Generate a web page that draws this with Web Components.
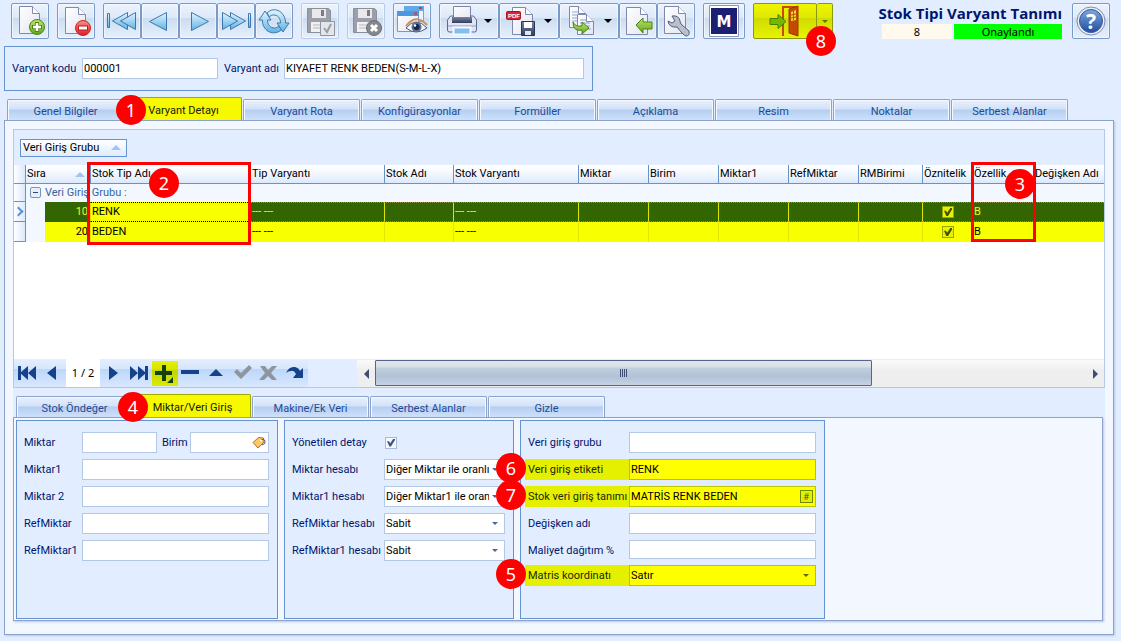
<!DOCTYPE html>
<html lang="tr">
<head>
<meta charset="utf-8">
<title>Stok Tipi Varyant Tanımı</title>
<style>
html, body { height: 100%; }
body {
  margin: 0;
  background: #e2eeff;
  color: #00156e;
  font: 11px/16px Roboto, "Noto Sans", sans-serif;
  --line: #8ca2cc;
  --frame: #6593cf;
  --input-line: #b3c8e6;
  --panel: #f3f7ff;
  --base: #e2eeff;
  --mark: #ffff00;
  --mark-dim: #e4f000;
}
</style>
</head>
<body>
<app-page>
  <tool-bar slot="toolbar"></tool-bar>
  <group-box slot="header" class="head">
    <form-field label="Varyant kodu" value="000001" style="--label:70px;width:206px"></form-field>
    <form-field label="Varyant adı" value="KIYAFET RENK BEDEN(S-M-L-X)" style="--label:60px;flex:1"></form-field>
  </group-box>
  <tab-strip slot="tabs" active="1" badge="1" items="Genel Bilgiler|Varyant Detayı|Varyant Rota|Konfigürasyonlar|Formüller|Açıklama|Resim|Noktalar|Serbest Alanlar"></tab-strip>
  <data-grid slot="grid"></data-grid>
  <record-nav slot="nav"></record-nav>
  <tab-strip slot="subtabs" style="--badge:102px" active="1" badge="4" items="Stok Öndeğer|Miktar/Veri Giriş|Makine/Ek Veri|Serbest Alanlar|Gizle"></tab-strip>
  <group-box slot="detail" style="width:262px;--label:58px">
    <field-pair>
      <form-field label="Miktar" style="flex:1"></form-field>
      <form-field label="Birim" icon="tag" style="--label:28px;width:107px"></form-field>
    </field-pair>
    <form-field label="Miktar1"></form-field>
    <form-field label="Miktar 2"></form-field>
    <form-field label="RefMiktar"></form-field>
    <form-field label="RefMiktar1"></form-field>
  </group-box>
  <group-box slot="detail" style="width:230px;--label:92px">
    <form-field label="Yönetilen detay" kind="check"></form-field>
    <form-field label="Miktar hesabı" kind="select" value="Diğer Miktar ile oranlı"></form-field>
    <form-field label="Miktar1 hesabı" kind="select" value="Diğer Miktar1 ile oranlı"></form-field>
    <form-field label="RefMiktar hesabı" kind="select" value="Sabit"></form-field>
    <form-field label="RefMiktar1 hesabı" kind="select" value="Sabit"></form-field>
  </group-box>
  <group-box slot="detail" style="width:305px;--label:101px">
    <form-field label="Veri giriş grubu"></form-field>
    <form-field label="Veri giriş etiketi" value="RENK" marked badge="6"></form-field>
    <form-field label="Stok veri giriş tanımı" value="MATRİS RENK BEDEN" icon="hash" marked badge="7"></form-field>
    <form-field label="Değişken adı"></form-field>
    <form-field label="Maliyet dağıtım %" compact></form-field>
    <form-field label="Matris koordinatı" kind="select" value="Satır" marked badge="5"></form-field>
  </group-box>
</app-page>

<script>
const define = (name, render) => customElements.define(name, class extends HTMLElement {
  connectedCallback() {
    if (this.shadowRoot) return;
    this.attachShadow({ mode: 'open' }).innerHTML = '<style>*{box-sizing:border-box}</style>' + render(this);
  }
});

/* ---------- icons ---------- */
const svg = (w, h, body) => `<svg width="${w}" height="${h}" viewBox="0 0 ${w} ${h}" aria-hidden="true">${body}</svg>`;
const GRAD = `<defs>
  <linearGradient id="b" x1="0" y1="0" x2="0" y2="1"><stop offset="0" stop-color="#e4f5fd"/><stop offset="1" stop-color="#5db2e4"/></linearGradient>
  <linearGradient id="g" x1="0" y1="0" x2="0" y2="1"><stop offset="0" stop-color="#c2e66b"/><stop offset="1" stop-color="#5fa51c"/></linearGradient>
  <linearGradient id="r" x1="0" y1="0" x2="0" y2="1"><stop offset="0" stop-color="#ff8d83"/><stop offset="1" stop-color="#d81f26"/></linearGradient>
  <linearGradient id="p" x1="0" y1="0" x2="1" y2="1"><stop offset="0" stop-color="#ffffff"/><stop offset="1" stop-color="#e3e6f2"/></linearGradient>
  <linearGradient id="k" x1="0" y1="0" x2="0" y2="1"><stop offset="0" stop-color="#7a86a5"/><stop offset="1" stop-color="#323c5c"/></linearGradient>
  <linearGradient id="q" x1="0" y1="0" x2="0" y2="1"><stop offset="0" stop-color="#7fa6dc"/><stop offset="1" stop-color="#1f4e9f"/></linearGradient>
</defs>`;
const page = (x, y, w, h) => `<path d="M${x} ${y}h${w - 7}l7 7v${h - 7}h${-w}z" fill="url(#p)" stroke="#8088b0"/><path d="M${x + w - 7} ${y}v7h7" fill="#fff" stroke="#8088b0"/>`;
const floppy = c => `<path d="M3.5 3.5h21l2 2v22h-23z" fill="${c}" stroke="#8b8f99"/><path d="M8 4h14v9H8z" fill="#e9e9ec"/><path d="M17 5h3v6h-3z" fill="#777c86"/><path d="M7 17h16v10H7z" fill="#f1f1f3"/><path d="M9 20h12M9 23h12" stroke="#b5b7bd"/>`;
const ICON = {
  add: svg(32, 32, GRAD + page(5.5, 1.5, 20, 27) + `<circle cx="23" cy="22" r="7.5" fill="url(#g)" stroke="#4a8317"/><path d="M23 17v10M18 22h10" stroke="#4a8317" stroke-width="4"/><path d="M23 18v8M19 22h8" stroke="#fff" stroke-width="2.5"/>`),
  del: svg(32, 32, GRAD + page(5.5, 2.5, 20, 26) + `<circle cx="23" cy="23" r="7.5" fill="url(#r)" stroke="#c22"/><path d="M18 23h10" stroke="#b51a20" stroke-width="5"/><path d="M19 23h8" stroke="#fff" stroke-width="3"/>`),
  first: svg(32, 32, GRAD + `<g fill="url(#b)" stroke="#3d78ac" stroke-linejoin="round"><path d="M1.5 8.5h2v14h-2z"/><path d="M21.5 7.5v17l-15-8.5z"/><path d="M29.5 7.5v17l-15-8.5z"/></g>`),
  prev: svg(32, 32, GRAD + `<path d="M22.5 7.5v18l-17-9z" fill="url(#b)" stroke="#3d78ac" stroke-linejoin="round"/>`),
  next: svg(32, 32, GRAD + `<path d="M9.5 7.5v18l17-9z" fill="url(#b)" stroke="#3d78ac" stroke-linejoin="round"/>`),
  last: svg(32, 32, GRAD + `<g fill="url(#b)" stroke="#3d78ac" stroke-linejoin="round"><path d="M28.5 8.5h2v14h-2z"/><path d="M10.5 7.5v17l15-8.5z"/><path d="M2.5 7.5v17l15-8.5z"/></g>`),
  sync: svg(32, 32, GRAD + `<g fill="url(#b)" stroke="#3d78ac" stroke-linejoin="round"><path d="M1 15L7 6l6 9H9.500c0 5 3 8 7 8 2 0 3-1 4-2l3 4C14 32 4 25 4.500 15z"/><path d="M31 18l-6 9-6-9h3.500c0-5-3-8-7-8-2 0-3 1-4 2L9 8C17 0 28 8 27.500 18z"/></g>`),
  save: svg(32, 32, floppy('#9b9fa9') + `<path d="M16.5 16.5h14v14h-14z" fill="#e4e6ea" stroke="#8f949e"/><path d="M20 23l3 4 4-8" fill="none" stroke="#9a9ea8" stroke-width="2"/>`),
  cancel: svg(32, 32, floppy('#9b9fa9') + `<circle cx="24" cy="23" r="7.5" fill="#85888f" stroke="#6c7078"/><path d="M21 20l6 6M27 20l-6 6" stroke="#fff" stroke-width="3"/>`),
  view: svg(32, 32, GRAD + `<path d="M8.5 1.5h19v15h-19z" fill="#eef5ff" stroke="#7ba3d5"/><path d="M8 1h20v5H8z" fill="#62a9e8"/><path d="M23 3h3" stroke="#d33" stroke-width="2"/><path d="M1.5 6.5h21v20h-21z" fill="url(#p)" stroke="#6f9bd0"/><path d="M1 6h22v5H1z" fill="#4a99e0"/><path d="M18 8.5h3" stroke="#e33" stroke-width="2"/><path d="M10 23q10-12 21 0-11 8-21 0z" fill="#f4f7fc" stroke="#4d5a78"/><path d="M10 21q10-13 21-1" fill="none" stroke="#c9935c" stroke-width="2"/><circle cx="20.5" cy="22" r="5" fill="#5b6c92"/><circle cx="20.5" cy="22" r="3" fill="#1b243e"/><circle cx="19" cy="20.5" r="1.2" fill="#fff"/>`),
  print: svg(32, 32, GRAD + `<path d="M7.5 1.5h17v14h-17z" fill="url(#p)" stroke="#7b86ad"/><path d="M1.5 15l3-4h3v5h17v-5h3l3 4v10q0 2-2 2h-25q-2 0-2-2z" fill="#dfe5f2" stroke="#5d6890"/><path d="M6 12h20v6H6z" fill="url(#k)"/><path d="M2 21h28" stroke="#8f9bbd"/><path d="M7.5 22.5h17v7h-17z" fill="#7fc0f0" stroke="#f5f8ff" stroke-width="2"/>`),
  pdf: svg(32, 32, GRAD + page(6.5, 2.5, 20, 27) + `<rect x=".5" y="6.5" width="14" height="8" rx="1" fill="#d8262c" stroke="#a8161c"/><text x="8" y="13" text-anchor="middle" font-family="Liberation Sans" font-weight="bold" font-size="6" fill="#fff">PDF</text><path d="M15.5 16.5h13v14h-13z" fill="url(#k)" stroke="#2b3554"/><path d="M18 17h8v6h-8z" fill="#fff"/><path d="M19 26h6v4h-6z" fill="#dfe6f5"/>`),
  copy: svg(32, 32, GRAD + page(3.5, 1.5, 16, 21) + `<path d="M6 7h6M6 10h6M6 13h9M6 16h9" stroke="#98a8cf"/>` + page(11.5, 9.5, 16, 20) + `<path d="M14 15h6M14 18h10M14 21h10M18 24h7" stroke="#7fa0dc"/><path d="M7 17q2 5 9 4v-4l7 6-7 6v-4Q7 27 7 17z" fill="url(#g)" stroke="#4a8317"/>`),
  imp: svg(32, 32, GRAD + page(4.5, 2.5, 21, 27) + `<path d="M14 20l7-7v4h9v7h-9v4z" fill="url(#g)" stroke="#4a8317"/>`),
  wrench: svg(32, 32, GRAD + page(4.5, 1.5, 21, 27) + `<path d="M12 11q7-1 8 5 0 2 2 4l7 6q1 5-3 5-3-1-9-9-8 1-9-6l4 2 3-2z" fill="#b9bfcd" stroke="#555f7e"/>`),
  m: svg(34, 32, `<path d="M2.5 .5h29v31h-29z" fill="#fff" stroke="#8c93b8"/><path d="M4 3h26v26H4z" fill="#1b2072"/><text x="17" y="22" text-anchor="middle" font-family="DejaVu Sans" font-weight="bold" font-size="15" fill="#fff">M</text>`),
  exit: svg(32, 32, `<path d="M14 31V2h14v29" fill="none" stroke="#cc4a00" stroke-width="2"/><path d="M20 4l9-3v30l-9-3z" fill="#c54a00" stroke="#9a3600"/><path d="M22 7l5-2v10l-5 1z" fill="#eadf2a"/><path d="M24.5 6v9M22 10l5-1M22 13l5-1" stroke="#c54a00"/><path d="M1 13.5h8v-4l8 7-8 7v-4H1z" fill="#76b800" stroke="#4b7f00"/>`),
  help: svg(32, 32, GRAD + `<circle cx="16" cy="16" r="14" fill="#e9eef8" stroke="#7c8fb8"/><circle cx="16" cy="16" r="11.5" fill="url(#q)" stroke="#3c5b98"/><text x="16" y="24" text-anchor="middle" font-family="Noto Sans" font-weight="bold" font-size="21" fill="#fff">?</text>`),
  tag: svg(14, 13, `<path d="M1 6.5L6.5 1.500l5 .5.5 4-6 6z" fill="#ffc864" stroke="#a9742c"/><path d="M9 4q3-2 4 1t-3 4" fill="none" stroke="#556" /><circle cx="9" cy="4.5" r="1" fill="#fff"/>`)
};
const NAV = {
  'İlk kayıt': ['#15428b', 'M-9-7h3v14h-3zM1-7v14l-8-7zM9-7v14l-8-7z'],
  'Önceki kayıt': ['#15428b', 'M3-7v14l-9-7z'],
  'Sonraki kayıt': ['#15428b', 'M-4-7v14l9-7z'],
  'Son kayıt': ['#15428b', 'M9-7h-3v14h3zM-1-7v14l8-7zM-9-7v14l8-7z'],
  'Ekle': ['#15400b', 'M-3-9h4v6h6v4h-6v6h-4v-6h-7v-4h7zM8 3v6h-6z'],
  'Sil': ['#15428b', 'M-10-3h18v4h-18z'],
  'Düzenle': ['#15428b', 'M-8 3l7-7 7 7z'],
  'Onayla': ['#8f959e', 'M-9-1l3-3 4 4 8-8 3 3-11 11z'],
  'Vazgeç': ['#8f959e', 'M-9-7h5l3 4 4-4h5l-6 7 6 7h-5l-4-4-4 4h-5l6-7z'],
  'Yenile': ['#15428b', 'M-9 0q3-7 9-6 4 1 5 4l3-3v10h-10l3-4q-2-4-5-3-3 0-5 2z']
};

/* ---------- numbered badge ---------- */
define('num-badge', () => `<style>
  :host { position: absolute; z-index: 3; width: 30px; height: 30px; border-radius: 50%; background: #fe0000;
    color: #fff; font: 18px/30px "Noto Sans", sans-serif; text-align: center; }
</style><slot></slot>`);

/* ---------- toolbar ---------- */
define('tool-button', el => `<style>
  :host { display: flex; position: relative; }
  button { display: flex; align-items: center; justify-content: center; height: 36px; width: 38px; padding: 0;
    border: 1px solid #7c9ac9; border-radius: 2px; font: inherit;
    background: linear-gradient(#ebf3fe, #dde9f8 40%, #ccdcf0 42%, #e6f0fc); box-shadow: inset 0 0 0 1px #ffffff80; }
  .split { width: 60px; justify-content: flex-start; padding-left: 6px; gap: 6px; }
  .split i { border: 4px solid transparent; border-top-color: #000; border-bottom: 0; }
  .wide { width: 42px; }
  .exit { width: 64px; border-color: #8a9a10; box-shadow: none; background: linear-gradient(#eef600, #dfe800 40%, #cfdb00 42%, #e8f200); }
  .more { width: 16px; border-color: #8a9a10; border-left: 0; box-shadow: none; background: linear-gradient(#eef600, #dfe800 40%, #cfdb00 42%, #e8f200); }
  .more i { border: 3px solid transparent; border-top-color: #5d7a00; border-bottom: 0; }
  .off { border-color: #b9cae4; }
</style>
<button type="button" aria-label="${el.title}" class="${el.getAttribute('look') || ''}">${ICON[el.getAttribute('icon')]}${el.getAttribute('look') === 'split' ? '<i></i>' : ''}</button>
${el.getAttribute('look') === 'exit' ? '<button type="button" class="more" aria-label="Diğer"><i></i></button>' : ''}<slot></slot>`);

const tb = (icon, title, look = '') => `<tool-button icon="${icon}" title="${title}" look="${look}"></tool-button>`;
define('tool-bar', () => `<style>
  :host { display: flex; align-items: flex-start; gap: 8px; padding: 3px 11px 0; }
  .set { display: flex; position: relative; }
  .status { margin: 0 2px 0 auto; color: #00156e; }
  h1 { margin: 0; font: bold 15px/21px "Open Sans", "Noto Sans", sans-serif; text-align: right; white-space: nowrap; }
  .row { display: flex; gap: 2px; justify-content: flex-end; color: #000; text-align: center; line-height: 15px; }
  .no { width: 70px; background: #fff9ee; }
  .ok { width: 108px; background: #0f0; }
  .row, num-badge { font-family: "Noto Sans", sans-serif; }
  num-badge { left: 53px; top: 23px; }
</style>
${tb('add', 'Yeni')}${tb('del', 'Sil')}
<div class="set">${tb('first', 'İlk')}${tb('prev', 'Önceki')}${tb('next', 'Sonraki')}${tb('last', 'Son')}${tb('sync', 'Yenile')}</div>
${tb('save', 'Kaydet', 'off')}${tb('cancel', 'Vazgeç', 'off')}${tb('view', 'İncele')}
<div class="set">${tb('print', 'Yazdır', 'split')}${tb('pdf', 'PDF kaydet', 'split')}${tb('copy', 'Kopyala', 'split')}${tb('imp', 'İçeri al')}${tb('wrench', 'Ayarlar')}</div>
${tb('m', 'M', 'wide')}
<div class="set">${tb('exit', 'Çıkış', 'exit')}<num-badge>8</num-badge></div>
<div class="status"><h1>Stok Tipi Varyant Tanımı</h1><div class="row"><span class="no">8</span><span class="ok">Onaylandı</span></div></div>
${tb('help', 'Yardım')}`);

/* ---------- framed group ---------- */
define('group-box', () => `<style>
  :host { display: flex; flex-direction: column; gap: 6px; box-sizing: border-box; min-height: 199px;
    padding: 11px 8px 11px 7px; border: 1px solid var(--frame); background: var(--base); }
  :host(.head) { flex-direction: row; min-height: 0; width: 589px; margin: 7px 4px 6px; }
</style><slot></slot>`);
define('field-pair', () => `<style>:host { display: flex; gap: 5px; }</style><slot></slot>`);

/* ---------- labelled field ---------- */
define('form-field', el => {
  const kind = el.getAttribute('kind'), value = el.getAttribute('value') || '', icon = el.getAttribute('icon');
  const control = kind === 'check' ? '<input id="c" type="checkbox" checked>'
    : kind === 'select' ? `<span class="box"><select id="c"><option>${value}</option></select><i></i></span>`
    : `<span class="box"><input id="c" type="text" value="${value}">${icon === 'tag' ? ICON.tag : icon === 'hash' ? '<button type="button">#</button>' : ''}</span>`;
  return `<style>
  :host { display: flex; position: relative; min-width: 0; height: 21px; }
  :host([compact]) { height: 19px; }
  label { width: calc(var(--label) + 3px); flex: none; margin-left: -3px; padding-left: 3px; line-height: 21px; white-space: nowrap; }
  .box { display: flex; align-items: center; flex: 1; min-width: 0; position: relative; border: 1px solid var(--input-line); background: #fff; }
  input[type=text], select { appearance: none; border: 0; background: none; padding: 0 1px; margin: 0; width: 100%; min-width: 0;
    height: 100%; font: inherit; color: #000; outline: 0; border-radius: 0; }
  select { padding-right: 15px; text-overflow: clip; }
  i { position: absolute; right: 6px; border: 3px solid transparent; border-top-color: #4a6a94; border-bottom: 0; }
  svg { flex: none; margin-right: 2px; }
  input[type=checkbox] { appearance: none; align-self: center; width: 12px; height: 12px; margin: 0 0 0 1px; border: 1px solid #a9bbd8; background: #f4f8ff; }
  input[type=checkbox]::before { content: ""; display: block; width: 8px; height: 8px; margin: 1px; background: #3f5687;
    clip-path: polygon(0 35%, 25% 35%, 40% 60%, 80% 0, 100% 0, 100% 20%, 50% 100%, 30% 100%); }
  button { flex: none; width: 13px; height: 13px; margin-right: 2px; padding: 0; border: 1px solid #6f8a00; background: #e4f000; color: #3f5a00; font: 9px/10px "Noto Sans", sans-serif; }
  :host([marked]) label { background: var(--mark-dim); color: #1a2a00; }
  :host([marked]) .box { background: var(--mark); border-color: #b9c400; }
  :host([marked]) i { border-top-color: #5d6a00; }
  num-badge { left: -32px; top: -6px; }
</style><label for="c">${el.getAttribute('label')}</label>${control}${el.hasAttribute('badge') ? `<num-badge>${el.getAttribute('badge')}</num-badge>` : ''}`;
});

/* ---------- tabs ---------- */
define('tab-strip', el => {
  const active = +el.getAttribute('active');
  return `<style>
  :host { display: flex; position: relative; align-items: flex-end; gap: 1px; }
  button { width: 117px; height: 21px; padding: 3px 0 0; border: 1px solid var(--line); border-bottom: 0; border-radius: 2px 2px 0 0;
    background: linear-gradient(#e8f1fe, #d3e2f7 45%, #b4cef2 50%, #cfe1fa); box-shadow: inset 1px 1px #f5f9ff, inset -1px 0 #f5f9ff;
    color: #1e4b96; font: inherit; line-height: 16px; white-space: nowrap; }
  button[aria-selected=true] { height: 23px; background: #f6f900; border-color: #a3a800; box-shadow: none; color: #15200a; }
  num-badge { left: var(--badge, 109px); top: -2px; }
</style>${el.getAttribute('items').split('|').map((t, i) => `<button type="button" role="tab" aria-selected="${i === active}">${t}</button>`).join('')}<num-badge>${el.getAttribute('badge')}</num-badge>`;
});

/* ---------- data grid ---------- */
const COLS = [['', 11], ['Sıra', 65], ['Stok Tip Adı', 160], ['Tip Varyantı', 134], ['Stok Adı', 69], ['Stok Varyantı', 125], ['Miktar', 70], ['Birim', 70], ['Miktar1', 70], ['RefMiktar', 70], ['RMBirimi', 64], ['Öznitelik', 50], ['Özellik', 61], ['Değişken Adı', 0]];
const ROWS = [['', '10', 'RENK', '--- ---', '', '--- ---', '', '', '', '', '', '*', 'B', ''], ['', '20', 'BEDEN', '--- ---', '', '--- ---', '', '', '', '', '', '*', 'B', '']];
define('data-grid', () => `<style>
  :host { display: block; position: relative; flex: 1; background: #fff; color: #000; }
  .group { display: flex; align-items: center; height: 35px; padding: 0 6px; background: var(--base); }
  .chip { display: flex; align-items: center; width: 107px; height: 18px; padding: 0 5px 0 2px; border: 1px solid var(--frame);
    background: linear-gradient(#fff, #e0ebfb); font: inherit; color: #000; white-space: nowrap; }
  .sort { margin-left: auto; border: 5px solid transparent; border-bottom-color: #9cc5f3; border-top: 0; }
  table { width: 100%; table-layout: fixed; border-collapse: separate; border-spacing: 0; }
  th, td { padding: 0 0 0 1px; text-align: left; font-weight: normal; overflow: hidden; white-space: nowrap; border-left: 1px solid var(--frame); }
  th { height: 19px; border-bottom: 1px solid var(--frame); background: linear-gradient(#fff, #f4f8ff 45%, #dbe8fb); line-height: 16px; }
  th div { display: flex; align-items: center; padding-right: 5px; }
  tr.sub td { height: 18px; line-height: 16px; background: var(--panel); color: #3764a0; }
  .rows td { height: 20px; line-height: 16px; background: #f7ff00; border-left-color: #e0e800; }
  .rows td:nth-child(2) { text-align: right; padding-right: 2px; border-left-color: var(--frame); background: linear-gradient(90deg, var(--panel) 19px, #f7ff00 19px); }
  .rows tr.on td { background: #336600; color: #f2f62a; border-left-color: #dbe600; border-top: 1px dotted #8f8f4a; border-bottom: 1px dotted #8f8f4a; }
  .rows tr.on td:nth-child(2) { background: linear-gradient(90deg, var(--panel) 19px, #336600 19px); border-left-color: var(--frame); border-top: 0; border-bottom: 0; }
  .rows tr.on td:nth-child(3) { background: #f7ff00; color: #000; border-top: 1px dotted #000; border-bottom: 1px dotted #000; }
  th:first-child, tr.sub td:first-child, .rows tr td:first-child, .rows tr.on td:first-child { background: linear-gradient(90deg, #fff, #dbe8fb);
    border: 0; border-bottom: 1px solid var(--frame); padding: 0; }
  .on td:first-child::before { content: ""; display: block; width: 5px; height: 5px; margin-left: 1px; border: solid #5a92d8; border-width: 2px 2px 0 0; transform: rotate(45deg); }
  .fold { width: 11px; height: 11px; margin: 0 4px 0 3px; padding: 0; border: 1px solid #7c95bd; border-radius: 2px; vertical-align: -1px;
    background: linear-gradient(#2b4a7c, #2b4a7c) center / 5px 1px no-repeat, #e8effa; }
  input { display: block; appearance: none; width: 12px; height: 12px; margin: 0 auto; border: 1px solid #9ba800; background: #eaf000; }
  input::before { content: ""; display: block; width: 8px; height: 8px; margin: 1px; background: #405400;
    clip-path: polygon(0 35%, 25% 35%, 40% 60%, 80% 0, 100% 0, 100% 20%, 50% 100%, 30% 100%); }
  .frame { position: absolute; z-index: 2; border: 3px solid #fe0000; }
  .f2 { left: 73px; top: 32px; width: 164px; height: 83px; }
  .f3 { left: 957px; top: 32px; width: 65px; height: 80px; }
  .b2 { left: 135px; top: 38px; }
  .b3 { left: 991px; top: 39px; }
</style>
<div class="group"><button type="button" class="chip">Veri Giriş Grubu<span class="sort"></span></button></div>
<table>
  <colgroup>${COLS.map(c => `<col${c[1] ? ` style="width:${c[1]}px"` : ''}>`).join('')}</colgroup>
  <thead><tr>${COLS.map((c, i) => `<th scope="col"><div>${c[0]}${i === 1 ? '<span class="sort"></span>' : ''}</div></th>`).join('')}</tr></thead>
  <tbody><tr class="sub"><td></td><td colspan="13"><button type="button" class="fold" aria-label="Daralt"></button>Veri Giriş Grubu :</td></tr></tbody>
  <tbody class="rows">${ROWS.map((r, n) => `<tr class="${n ? '' : 'on'}">${r.map(v => `<td>${v === '*' ? '<input type="checkbox" checked aria-label="Öznitelik">' : v}</td>`).join('')}</tr>`).join('')}</tbody>
</table>
<div class="frame f2"></div><div class="frame f3"></div>
<num-badge class="b2">2</num-badge><num-badge class="b3">3</num-badge>`);

/* ---------- record navigator with scrollbar ---------- */
const navButton = k => `<button type="button" aria-label="${k}" class="${k === 'Ekle' ? 'mark' : ''}"><svg width="26" height="24" viewBox="-13 -12 26 24"><path d="${NAV[k][1]}" fill="${NAV[k][0]}"/></svg></button>`;
define('record-nav', () => `<style>
  :host { display: flex; height: 28px; background: var(--base); }
  nav { display: flex; flex: none; background: linear-gradient(#e3efff, #d6e6fd 35%, #bcd7fa 37%, #d9e8fe); }
  button { width: 26px; padding: 0; border: 0; background: none; display: flex; align-items: center; }
  .mark { background: linear-gradient(#e6f200, #d4e200 35%, #c2d400 37%, #dcea00); margin: 2px 0 1px; }
  nav span { width: 34px; background: #fff; color: #000; text-align: center; line-height: 28px; font-family: "Noto Sans", sans-serif; }
  .bar { display: flex; flex: 1; margin: 1px 0 0 49px; background: linear-gradient(#fafafa, #eee 40%); }
  .arrow { width: 18px; justify-content: center; }
  .arrow i { border: 5px solid transparent; border-left: 0; border-right-color: #3f4d70; }
  .arrow.r i { border-left: 5px solid #3f4d70; border-right: 0; }
  .thumb { flex: 497; display: flex; align-items: center; justify-content: center; gap: 1px; height: 26px; border: 1px solid #54658f; border-radius: 1px;
    background: linear-gradient(#e0e6ea, #d8e0e6 26%, #c0d0de 28%, #b2c2d6 65%, #c8d2e4); }
  .thumb b { width: 1px; height: 8px; background: #3f4d70; }
  .rest { flex: 215; }
</style>
<nav>${navButton('İlk kayıt')}${navButton('Önceki kayıt')}<span>1 / 2</span>${Object.keys(NAV).slice(2).map(navButton).join('')}</nav>
<div class="bar"><button type="button" class="arrow" aria-label="Sola"><i></i></button><div class="thumb"><b></b><b></b><b></b><b></b></div><div class="rest"></div><button type="button" class="arrow r" aria-label="Sağa"><i></i></button></div>`);

/* ---------- page frame ---------- */
define('app-page', () => `<style>
  :host { display: flex; flex-direction: column; min-height: 100vh; box-sizing: border-box; padding-bottom: 6px; }
  .tabs { padding-left: 7px; }
  main { flex: 1; display: flex; flex-direction: column; margin: 0 7px 0 4px; padding: 8px 8px 13px; border: 1px solid var(--line);
    background: var(--panel); box-shadow: 1px 1px 2px #b4c8e6; }
  .grid { flex: 1; display: flex; flex-direction: column; border: 1px solid var(--input-line); }
  .sub { padding: 6px 3px 0; background: var(--base); }
  .detail { display: flex; gap: 6px; margin-right: 2px; padding: 2px 2px 1px; border: 1px solid var(--line); background: var(--panel); box-shadow: 1px 1px 2px #b4c8e6; }
</style>
<slot name="toolbar"></slot>
<slot name="header"></slot>
<div class="tabs"><slot name="tabs"></slot></div>
<main>
  <div class="grid"><slot name="grid"></slot><slot name="nav"></slot></div>
  <div class="sub"><slot name="subtabs"></slot></div>
  <div class="detail"><slot name="detail"></slot></div>
</main>`);
</script>
</body>
</html>
